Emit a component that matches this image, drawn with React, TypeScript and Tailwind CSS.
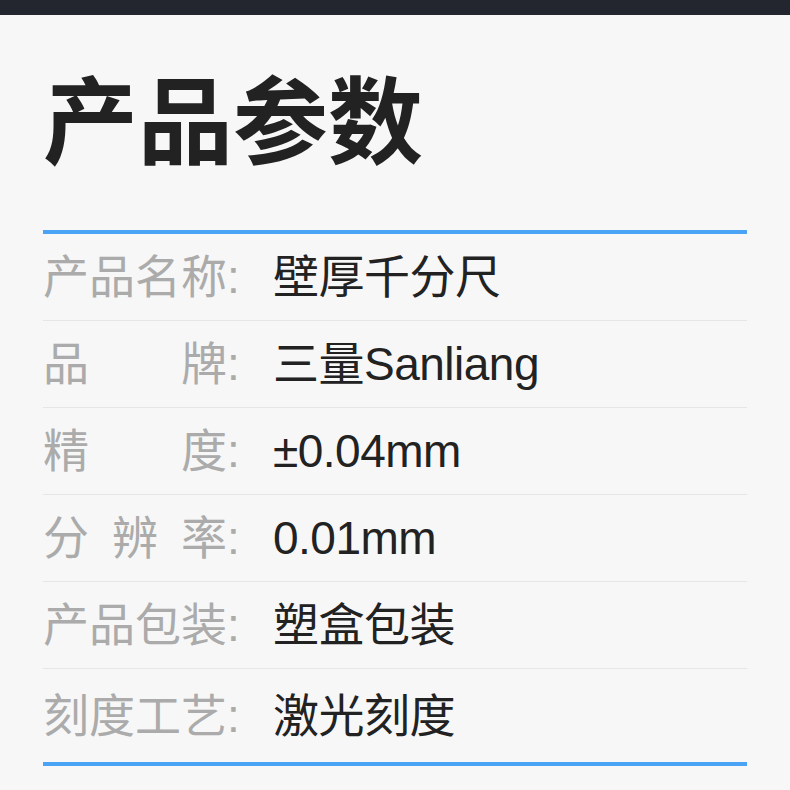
import React from 'react'

// Parameter rows: label chars are spread across a 4-char box
const rows = [
  { label: ['产', '品', '名', '称'], value: '壁厚千分尺' },
  { label: ['品', '牌'], value: '三量Sanliang' },
  { label: ['精', '度'], value: '±0.04mm' },
  { label: ['分', '辨', '率'], value: '0.01mm' },
  { label: ['产', '品', '包', '装'], value: '塑盒包装' },
  { label: ['刻', '度', '工', '艺'], value: '激光刻度' },
]

export default function App() {
  return (
    <div className="w-[790px] h-[790px] bg-[#f7f7f7] overflow-hidden font-['Liberation_Sans','Noto_Sans_CJK_SC',sans-serif]">
      <div className="h-[15px] bg-[#23252f]" />

      <div className="px-[43px]">
        <h1 className="h-[215px] pt-[53px] text-[95px] leading-none font-bold text-[#222] font-['Noto_Sans_CJK_SC',sans-serif]">
          产品参数
        </h1>

        <div className="h-[4px] bg-[#4ba3f5]" />

        {rows.map((row, i) => (
          <div
            key={i}
            className={
              i === rows.length - 1
                ? 'flex items-center h-[93px] text-[46px] leading-none'
                : 'flex items-center h-[87px] border-b border-[#e6e6e6] text-[46px] leading-none'
            }
          >
            <div className="w-[230px] flex text-[#ababab]">
              <div className="w-[184px] flex justify-between">
                {row.label.map((c, j) => (
                  <span key={j}>{c}</span>
                ))}
              </div>
              <span>:</span>
            </div>
            <div className="text-[#222] tracking-[-0.5px]">{row.value}</div>
          </div>
        ))}

        <div className="h-[4px] bg-[#4ba3f5]" />
      </div>
    </div>
  )
}
